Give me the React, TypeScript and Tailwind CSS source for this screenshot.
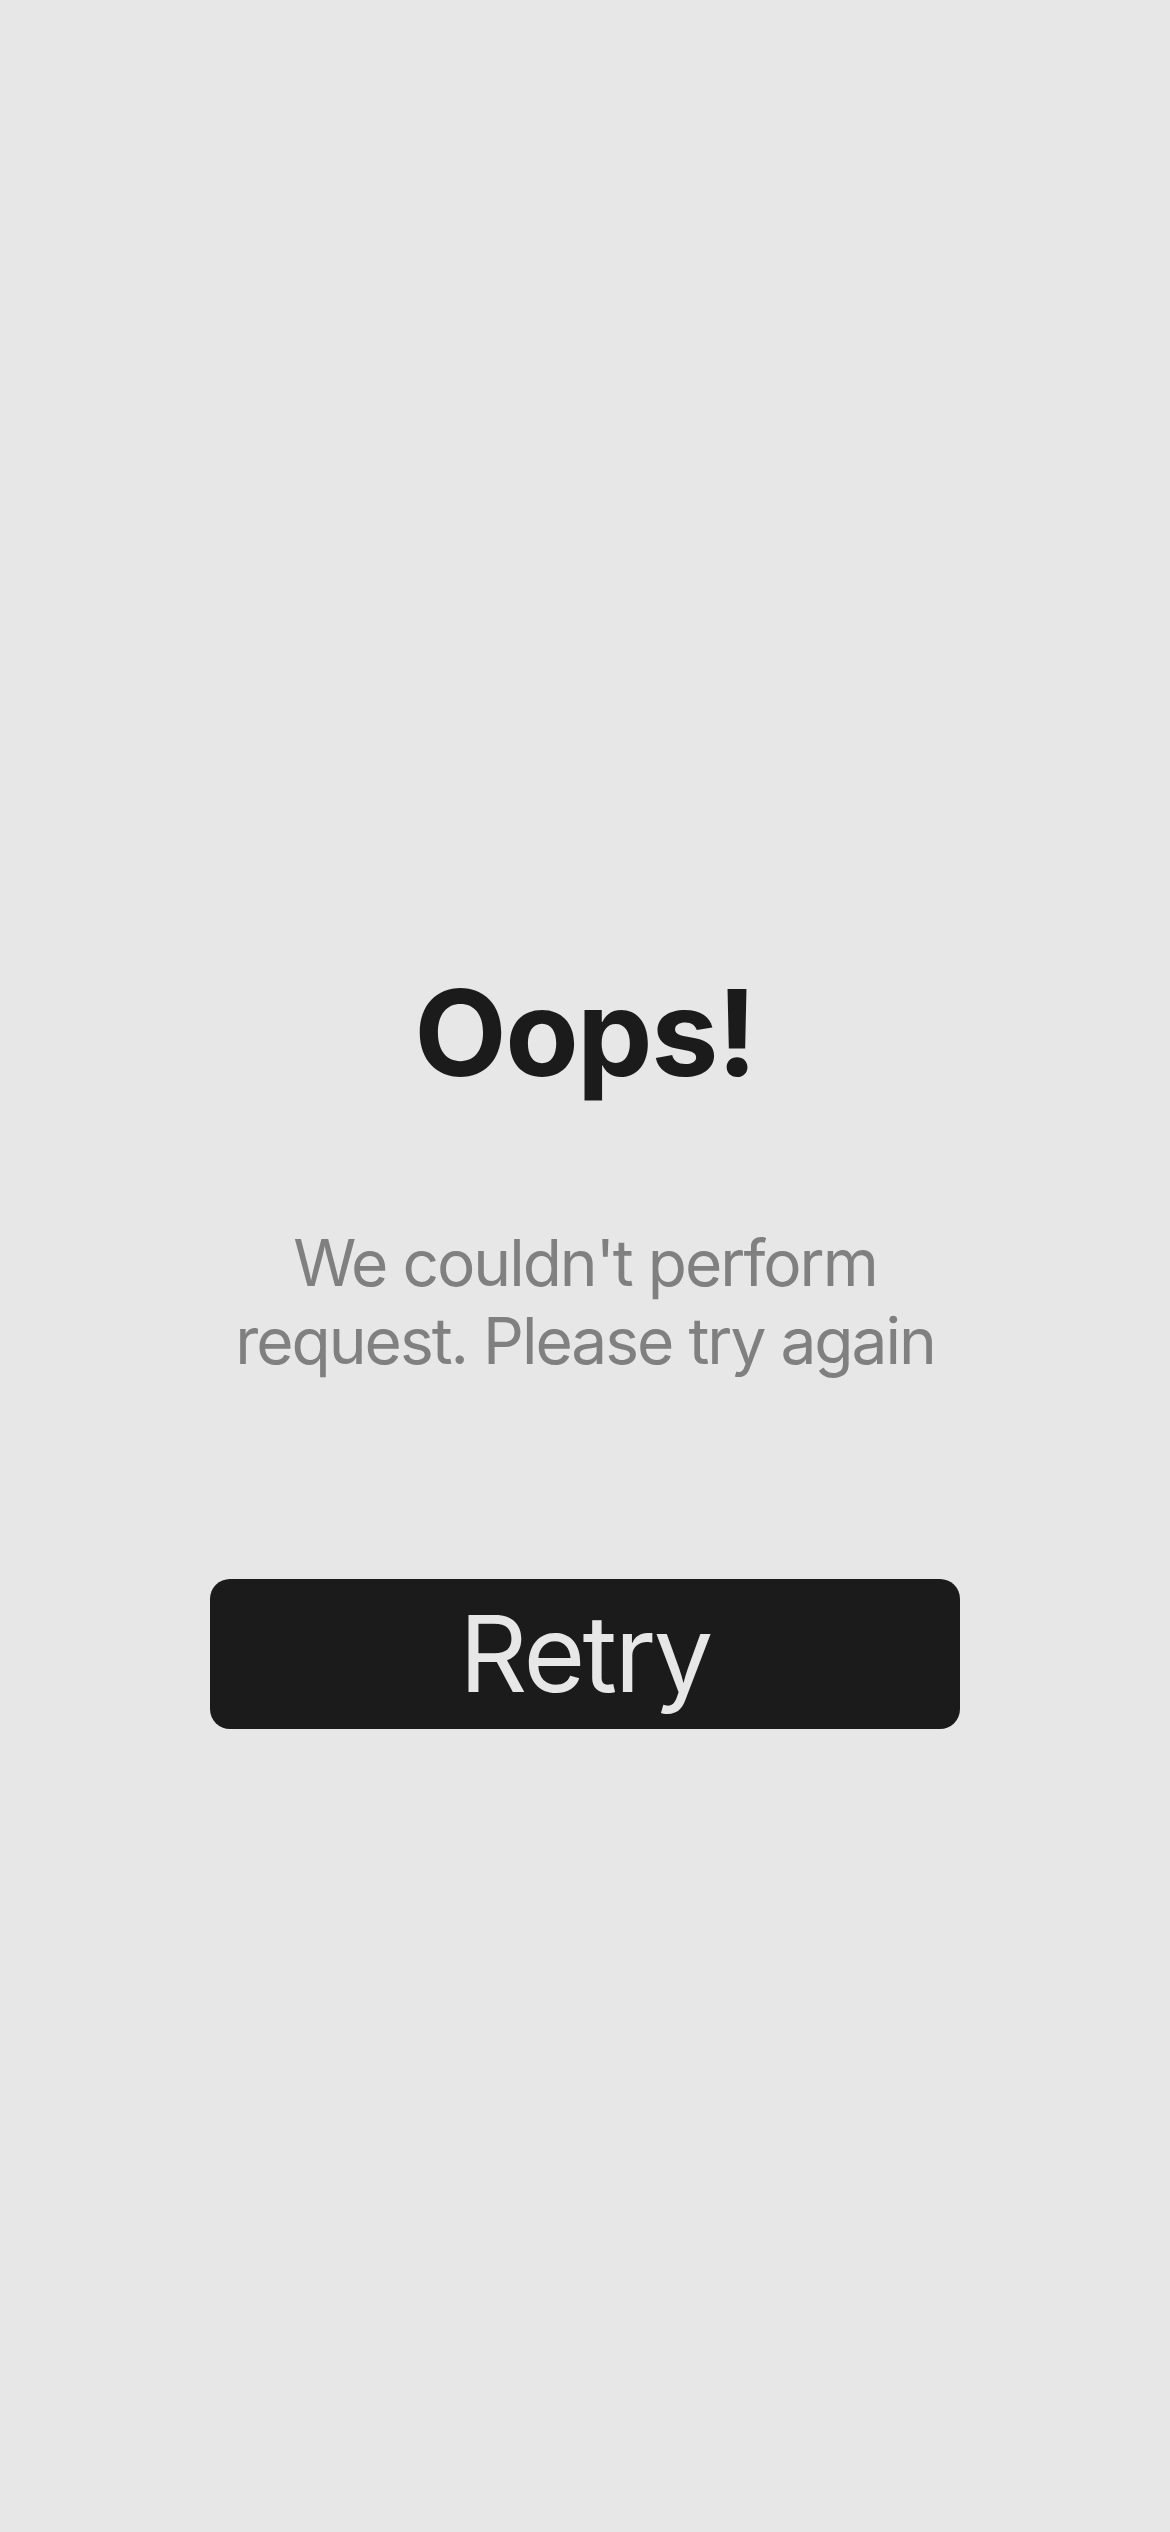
export default function App(): React.ReactElement {
  return (
    <div className="min-h-screen w-full bg-[#e7e7e7] font-['Inter','Noto_Sans',sans-serif]">
      <div className="flex flex-col items-center pt-[973px]">
        <h1 className="text-[120px] leading-none font-bold tracking-[-1.6px] text-[#1b1b1b]">
          Oops!
        </h1>
        <p className="mt-[131px] w-[750px] text-center text-[64px] leading-[78px] tracking-[-2px] text-[#808080]">
          We couldn't perform request. Please try again
        </p>
        <button
          type="button"
          className="mt-[199px] flex h-[150px] w-[750px] items-center justify-center rounded-[20px] bg-[#1b1b1b] text-[106px] leading-none tracking-[-2.6px] text-[#e7e7e7]"
        >
          Retry
        </button>
      </div>
    </div>
  );
}
